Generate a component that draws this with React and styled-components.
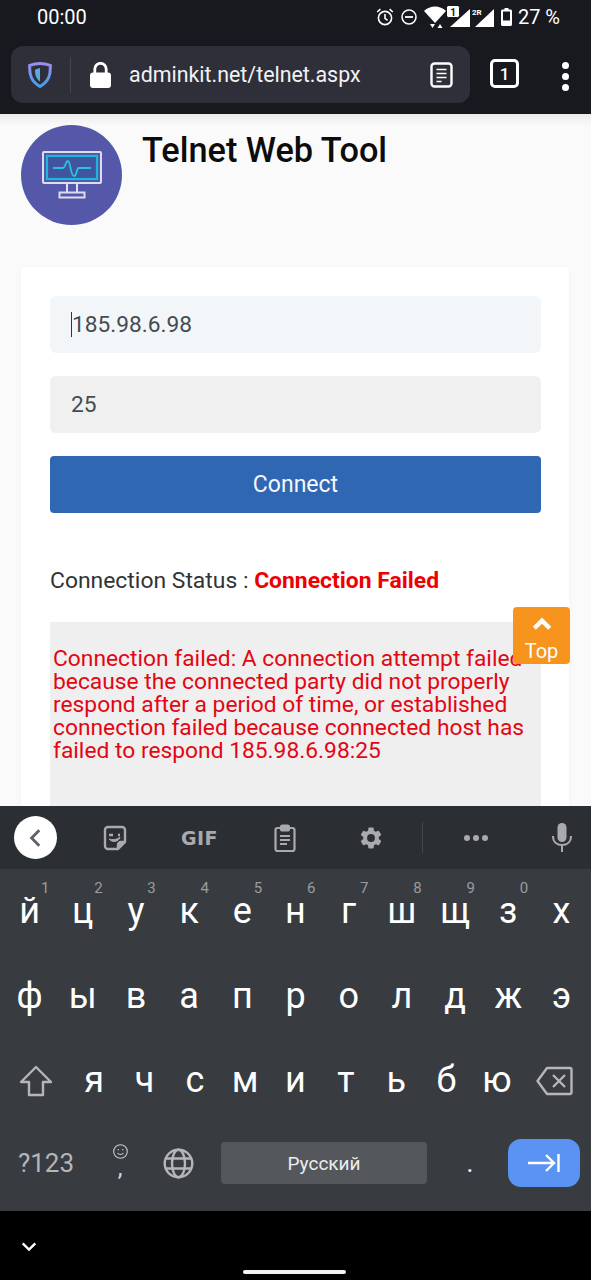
import React from 'react';
import styled, { createGlobalStyle } from 'styled-components';

const GlobalStyle = createGlobalStyle`
  html, body { margin: 0; padding: 0; background: #000; }
  body { font-family: Roboto, "Liberation Sans", sans-serif; }
`;

const Screen = styled.div`
  width: 591px;
  height: 1280px;
  display: flex;
  flex-direction: column;
  overflow: hidden;
  position: relative;
`;

const Chrome = styled.div`
  height: 114px;
  flex: none;
  background: #18181f;
  display: flex;
  flex-direction: column;
`;

const StatusBar = styled.div`
  height: 36px;
  box-sizing: border-box;
  padding: 0 31px 2px 37px;
  display: flex;
  align-items: center;
  justify-content: space-between;
  color: #fff;
  font-size: 20px;
`;

const StatusIcons = styled.div`
  display: flex;
  align-items: center;
`;

const IconSlot = styled.span`
  display: flex;
  margin-left: ${p => p.$ml || 0}px;
`;

const Toolbar = styled.div`
  height: 78px;
  padding: 10px 0 0 11px;
  box-sizing: border-box;
  display: flex;
  align-items: flex-start;
`;

const UrlBar = styled.div`
  width: 459px;
  height: 57px;
  border-radius: 12px;
  background: #2f2f39;
  display: flex;
  align-items: center;
  padding: 0 17px 0 17px;
  box-sizing: border-box;
`;

const Divider = styled.div`
  width: 1px;
  height: 36px;
  background: #45454f;
  margin: 0 19px 0 18px;
`;

const UrlText = styled.span`
  color: #f2f2f4;
  font-size: 21.4px;
  margin-left: 18px;
  flex: 1;
`;

const TabCount = styled.div`
  width: 23px;
  height: 23px;
  margin-left: 20px;
  margin-top: 13px;
  border: 3px solid #fff;
  border-radius: 5px;
  color: #fff;
  font-size: 17px;
  font-weight: 500;
  display: flex;
  align-items: center;
  justify-content: center;
`;

const MenuDots = styled.div`
  margin-left: 43px;
  margin-top: 16px;
  display: flex;
  flex-direction: column;
  gap: 4px;
  span { width: 7px; height: 7px; border-radius: 50%; background: #fff; }
`;

const Page = styled.main`
  flex: 1;
  min-height: 0;
  overflow: hidden;
  background: linear-gradient(#ececec 0, #fafafa 12px, #fafafa 100%);
  padding: 11px 22px 0 21px;
  position: relative;
`;

const Header = styled.header`
  display: flex;
  gap: 21px;
  height: 142px;
`;

const Avatar = styled.div`
  width: 101px;
  height: 100px;
  border-radius: 50%;
  background: #5558a8;
  display: flex;
  align-items: center;
  justify-content: center;
`;

const Title = styled.h1`
  margin: 3px 0 0 -1px;
  font-size: 34.3px;
  line-height: 44px;
  font-weight: 500;
  color: #0c0c0c;
`;

const Card = styled.section`
  background: #fff;
  border-radius: 4px;
  padding: 29px 28px 0 29px;
  height: 600px;
  display: flex;
  flex-direction: column;
  box-shadow: 0 0 6px rgba(0, 0, 0, 0.03);
`;

const Field = styled.div`
  height: 57px;
  flex: none;
  border-radius: 6px;
  background: ${p => (p.$focused ? '#f2f6f8' : '#f0f0f0')};
  color: #444b52;
  font-size: 22.7px;
  display: flex;
  align-items: center;
  padding-left: 21px;
  margin-bottom: 23px;
`;

const Caret = styled.span`
  width: 1px;
  height: 25px;
  background: #333;
`;

const ConnectButton = styled.button`
  height: 57px;
  flex: none;
  border: none;
  border-radius: 4px;
  background: #2f67b2;
  color: #f4f7fb;
  font: 400 23px Roboto, sans-serif;
`;

const StatusLine = styled.p`
  margin: 54px 0 27px;
  font-size: 22.9px;
  line-height: 28px;
  color: #333;
  b { color: #ee0000; font-weight: 700; }
`;

const Output = styled.pre`
  margin: 0;
  flex: 1;
  background: #efefef;
  padding: 25px 3px 0;
  color: #e30613;
  font: 400 22.8px/23px Roboto, sans-serif;
  white-space: normal;
`;

const TopButton = styled.div`
  position: absolute;
  left: 513px;
  top: 493px;
  width: 57px;
  height: 57px;
  border-radius: 4px;
  background: #f7941e;
  color: #fff;
  font-size: 20px;
  display: flex;
  flex-direction: column;
  align-items: center;
  gap: 3px;
  padding-top: 7px;
  box-sizing: border-box;
`;

const Keyboard = styled.div`
  height: 405px;
  flex: none;
  background: #383c40;
  display: flex;
  flex-direction: column;
`;

const Strip = styled.div`
  height: 63px;
  flex: none;
  background: #2b2f33;
  display: grid;
  grid-template-columns: 72px 85px 85px 86px 86px 124px 1fr;
  align-items: center;
  color: #a8aaad;
  position: relative;
`;

const StripCell = styled.div`
  display: flex;
  align-items: center;
  justify-content: center;
  padding-right: ${p => p.$pr || 0}px;
`;

const BackCircle = styled.div`
  width: 43px;
  height: 43px;
  border-radius: 50%;
  background: #fff;
  display: flex;
  align-items: center;
  justify-content: center;
  margin-left: -1px;
`;

const GifLabel = styled.span`
  font: 700 19px "DejaVu Sans", sans-serif;
  letter-spacing: 0.5px;
`;

const StripRule = styled.div`
  position: absolute;
  left: 422px;
  top: 16px;
  width: 1px;
  height: 31px;
  background: #43474b;
`;

const KeyRow = styled.div`
  height: ${p => p.$h}px;
  box-sizing: border-box;
  flex: none;
  display: grid;
  grid-template-columns: ${p => p.$cols};
  align-items: center;
  padding: ${p => p.$pad || '0 3px'};
`;

const Key = styled.div`
  position: relative;
  display: flex;
  align-items: center;
  justify-content: center;
  color: ${p => (p.$muted ? '#b4b6b8' : '#fff')};
  font-size: ${p => p.$size || 36}px;
  line-height: 0.8;
  height: 100%;
  padding-left: ${p => p.$pl || 0}px;
`;

const Hint = styled.span`
  position: absolute;
  top: 12px;
  left: 38px;
  font-size: 15px;
  line-height: 1;
  color: #9a9c9f;
`;

const SpaceKey = styled.div`
  height: 42px;
  margin-left: 24px;
  border-radius: 4px;
  background: #54585c;
  color: #eceded;
  font-size: 19px;
  display: flex;
  align-items: center;
  justify-content: center;
`;

const EnterKey = styled.div`
  height: 48px;
  width: 72px;
  justify-self: end;
  border-radius: 13px;
  background: #5b93f2;
  display: flex;
  align-items: center;
  justify-content: center;
`;

const CommaKey = styled.div`
  display: flex;
  flex-direction: column;
  align-items: center;
  color: #d5d6d7;
  font-size: 24px;
  line-height: 18px;
  margin-bottom: 6px;
`;

const NavBar = styled.div`
  height: 69px;
  flex: none;
  background: #000;
  display: flex;
  flex-direction: column;
  padding: 26px 0 0 20px;
  box-sizing: border-box;
`;

const HomePill = styled.div`
  width: 103px;
  height: 4px;
  margin: 15px 0 0 223px;
  border-radius: 2px;
  background: #f4f4f4;
`;

const Alarm = () => (
  <svg width="18" height="18" viewBox="0 0 18 18" fill="none" stroke="#fff" strokeWidth="1.6">
    <circle cx="9" cy="10" r="6.6" />
    <path d="M9 6v4.400l2.600 2M1.200 4 4.400 1.200M16.800 4 13.600 1.200" />
  </svg>
);

const Dnd = () => (
  <svg width="16" height="16" viewBox="0 0 16 16" fill="none" stroke="#fff" strokeWidth="1.500">
    <circle cx="8" cy="8" r="7" />
    <path d="M4 8h8" strokeWidth="1.800" />
  </svg>
);

const Wifi = () => (
  <svg width="22" height="22" viewBox="0 0 22 22" fill="#fff">
    <path d="M0 5C6-1 16-1 22 5L11 17Z" />
    <path d="M6 18h5l-2.500 4ZM13.500 22h5L16 18Z" />
  </svg>
);

const SignalOne = () => (
  <svg width="23" height="22" viewBox="0 0 23 22" fill="#fff">
    <path d="M23 3V21H3Z" />
    <rect x="-0.500" y="-0.500" width="13" height="12" rx="2" stroke="#18181f" />
    <text x="6" y="9.500" fontSize="10" fontWeight="700" fontFamily="Roboto, sans-serif" fill="#18181f" textAnchor="middle">1</text>
  </svg>
);

const SignalTwo = () => (
  <svg width="22" height="22" viewBox="0 0 22 22" fill="#fff">
    <path d="M22 3V21H3Z" />
    <text x="0" y="9" fontSize="8" fontWeight="700" fontFamily="Roboto, sans-serif">2R</text>
  </svg>
);

const Battery = () => (
  <svg width="11" height="18" viewBox="0 0 11 18" fill="none">
    <path d="M3.500 0h4v1.500h2c.8 0 1.500.7 1.500 1.500v13.500c0 .8-.7 1.500-1.500 1.500h-8C.7 18 0 17.300 0 16.500V3c0-.8.7-1.500 1.500-1.500h2Z" fill="#fff" />
    <rect x="2" y="3.500" width="7" height="9" fill="#18181f" />
  </svg>
);

const Shield = () => (
  <svg width="24" height="26" viewBox="0 0 24 26">
    <defs>
      <linearGradient id="sh" x1="0" y1="0" x2="0" y2="1">
        <stop offset="0" stopColor="#9d8cf0" />
        <stop offset="1" stopColor="#3fa0ef" />
      </linearGradient>
    </defs>
    <path d="M12 1.500c3.300 0 7 .7 10.300 1.800.4 9-1 15.700-10.300 21.200C2.700 19 1.300 12.300 1.700 3.300 5 2.200 8.700 1.500 12 1.500Z" fill="none" stroke="url(#sh)" strokeWidth="3" />
    <path d="M12 6v13.500c-3.800-2.800-5-6-5-11.800C8.700 7 10.300 6.400 12 6Z" fill="#5da6e8" />
  </svg>
);

const Lock = () => (
  <svg width="21" height="26" viewBox="0 0 21 26" fill="#fff">
    <path d="M4.800 12V7a5.700 5.700 0 0 1 11.400 0v5" fill="none" stroke="#fff" strokeWidth="2.800" />
    <rect x="0" y="10.500" width="21" height="15.500" rx="3" />
  </svg>
);

const ReaderIcon = () => (
  <svg width="23" height="26" viewBox="0 0 23 26" fill="none" stroke="#fff" strokeWidth="2.400">
    <rect x="1.500" y="1.500" width="20" height="23" rx="3" />
    <path d="M6.500 7.500h10M6.500 11.500h10M6.500 15.500h10M6.500 19.500h5" strokeWidth="1.700" />
  </svg>
);

const MonitorLogo = () => (
  <svg width="60" height="48" viewBox="0 0 60 48" fill="none">
    <rect x="1" y="1" width="58" height="31" rx="1" stroke="#dcdcf2" strokeWidth="2" />
    <rect x="5" y="5" width="50" height="23" fill="#41549f" stroke="#19b8d8" strokeWidth="2.200" />
    <path d="M11 17h10c2.500 0 2.500-7 5-7s2.500 15 6 15 2-8 5-8h12" stroke="#27c4dc" strokeWidth="1.800" />
    <path d="M25 33v8M35 33v8" stroke="#dcdcf2" strokeWidth="2" />
    <rect x="17.500" y="41.500" width="25" height="5" stroke="#dcdcf2" strokeWidth="2" />
  </svg>
);

const Chevron = ({ color, size = 20, dir = 'left', width = 2.600 }) => {
  const d = dir === 'left' ? 'M13 3 6 10l7 7' : dir === 'up' ? 'M3 13l7-7 7 7' : 'M3 7l7 7 7-7';
  return (
    <svg width={size} height={size} viewBox="0 0 20 20" fill="none" stroke={color} strokeWidth={width}>
      <path d={d} />
    </svg>
  );
};

const Sticker = () => (
  <svg width="24" height="26" viewBox="0 0 24 26" fill="none" stroke="#a8aaad" strokeWidth="2.400">
    <path d="M5 2h14a3 3 0 0 1 3 3v12l-7 7H5a3 3 0 0 1-3-3V5a3 3 0 0 1 3-3Z" />
    <path d="M22 17h-4a3 3 0 0 0-3 3v4" fill="#a8aaad" />
    <path d="M6 10h4M15 10h2" strokeWidth="2.600" />
    <path d="M6 14c3 1 8 1 11-2-1 5-8 6-11 2Z" fill="#a8aaad" strokeWidth="1" />
  </svg>
);

const Clipboard = () => (
  <svg width="22" height="28" viewBox="0 0 22 28" fill="none" stroke="#a8aaad" strokeWidth="2.200">
    <rect x="1.500" y="4" width="19" height="23" rx="2" />
    <rect x="7" y="1.500" width="8" height="5" rx="1.500" fill="#a8aaad" />
    <path d="M6 12h10M6 16h10M6 20h7" />
  </svg>
);

const Gear = () => (
  <svg width="26" height="26" viewBox="0 0 24 24" fill="#a8aaad">
    <path d="M19.140 12.940c.04-.3.060-.61.060-.94s-.02-.64-.070-.94l2.030-1.580a.5.5 0 0 0 .12-.61l-1.920-3.320a.5.5 0 0 0-.59-.22l-2.390.96a7 7 0 0 0-1.620-.94l-.36-2.540a.5.5 0 0 0-.48-.41h-3.840a.5.5 0 0 0-.47.41l-.36 2.540c-.59.24-1.130.57-1.620.94l-2.390-.96a.5.5 0 0 0-.59.22L2.740 8.870a.5.5 0 0 0 .12.61l2.030 1.580c-.05.3-.09.63-.09.94s.02.64.070.94l-2.030 1.580a.5.5 0 0 0-.12.61l1.920 3.320c.12.22.37.29.59.22l2.390-.96c.5.38 1.030.7 1.620.94l.36 2.540c.05.24.24.41.48.41h3.840c.24 0 .44-.17.47-.41l.36-2.540c.59-.24 1.130-.56 1.620-.94l2.390.96c.22.08.47 0 .59-.22l1.920-3.320a.5.5 0 0 0-.12-.61l-2.010-1.580ZM12 15.600A3.600 3.600 0 1 1 12 8.400a3.600 3.600 0 0 1 0 7.200Z" />
  </svg>
);

const Dots = () => (
  <svg width="24" height="6" viewBox="0 0 24 6" fill="#a8aaad">
    <circle cx="3" cy="3" r="3" />
    <circle cx="12" cy="3" r="3" />
    <circle cx="21" cy="3" r="3" />
  </svg>
);

const Mic = () => (
  <svg width="20" height="29" viewBox="0 0 20 29" fill="none">
    <rect x="5.500" y="0" width="9" height="19" rx="4.500" fill="#a8aaad" />
    <path d="M1 13c0 6 4 9 9 9s9-3 9-9M10 22v7" stroke="#a8aaad" strokeWidth="2" />
  </svg>
);

const ShiftIcon = () => (
  <svg width="34" height="32" viewBox="0 0 34 32" fill="none" stroke="#b4b6b8" strokeWidth="2.400" strokeLinejoin="round">
    <path d="M17 2 2 17h8v13h14V17h8Z" />
  </svg>
);

const Backspace = () => (
  <svg width="37" height="30" viewBox="0 0 37 30" fill="none" stroke="#b4b6b8" strokeWidth="2.400" strokeLinejoin="round">
    <path d="M11 2h23a1.500 1.500 0 0 1 1.500 1.500v23A1.500 1.500 0 0 1 34 28H11L1.500 15Z" />
    <path d="M17 9l12 12M29 9 17 21" />
  </svg>
);

const Globe = () => (
  <svg width="31" height="31" viewBox="0 0 31 31" fill="none" stroke="#b4b6b8" strokeWidth="2.400">
    <circle cx="15.500" cy="15.500" r="13.800" />
    <ellipse cx="15.500" cy="15.500" rx="6.500" ry="13.800" />
    <path d="M2.500 10.500h26M2.500 20.500h26" />
  </svg>
);

const Smiley = () => (
  <svg width="15" height="15" viewBox="0 0 15 15" fill="none" stroke="#c8c9ca" strokeWidth="1.100">
    <circle cx="7.500" cy="7.500" r="6.800" />
    <circle cx="5.200" cy="5.800" r=".7" fill="#c8c9ca" stroke="none" />
    <circle cx="9.800" cy="5.800" r=".7" fill="#c8c9ca" stroke="none" />
    <path d="M4.500 9c1.500 2 4.500 2 6 0" />
  </svg>
);

const TabArrow = () => (
  <svg width="32" height="20" viewBox="0 0 32 20" fill="none" stroke="#fff" strokeWidth="2.400">
    <path d="M0 10h26M18 2l8 8-8 8M30.500 1v18" />
  </svg>
);

const row1 = [['й', 1], ['ц', 2], ['у', 3], ['к', 4], ['е', 5], ['н', 6], ['г', 7], ['ш', 8], ['щ', 9], ['з', 0], ['х']];
const row2 = ['ф', 'ы', 'в', 'а', 'п', 'р', 'о', 'л', 'д', 'ж', 'э'];
const row3 = ['я', 'ч', 'с', 'м', 'и', 'т', 'ь', 'б', 'ю'];

const App = () => (
  <Screen>
    <GlobalStyle />
    <Chrome>
      <StatusBar>
        <span>00:00</span>
        <StatusIcons>
          <IconSlot><Alarm /></IconSlot>
          <IconSlot $ml={7}><Dnd /></IconSlot>
          <IconSlot $ml={7}><Wifi /></IconSlot>
          <IconSlot $ml={1}><SignalOne /></IconSlot>
          <IconSlot $ml={2}><SignalTwo /></IconSlot>
          <IconSlot $ml={7}><Battery /></IconSlot>
          <IconSlot $ml={6}>27 %</IconSlot>
        </StatusIcons>
      </StatusBar>
      <Toolbar>
        <UrlBar>
          <Shield />
          <Divider />
          <Lock />
          <UrlText>adminkit.net/telnet.aspx</UrlText>
          <ReaderIcon />
        </UrlBar>
        <TabCount>1</TabCount>
        <MenuDots>
          <span />
          <span />
          <span />
        </MenuDots>
      </Toolbar>
    </Chrome>
    <Page>
      <Header>
        <Avatar>
          <MonitorLogo />
        </Avatar>
        <Title>Telnet Web Tool</Title>
      </Header>
      <Card>
        <Field $focused>
          <Caret />
          185.98.6.98
        </Field>
        <Field>25</Field>
        <ConnectButton>Connect</ConnectButton>
        <StatusLine>
          Connection Status : <b>Connection Failed</b>
        </StatusLine>
        <Output>
          Connection failed: A connection attempt failed because the connected party did not properly respond after a period of time, or established connection failed because connected host has failed to respond 185.98.6.98:25
        </Output>
      </Card>
      <TopButton>
        <Chevron dir="up" color="#fff" size={22} width={4} />
        Top
      </TopButton>
    </Page>
    <Keyboard>
      <Strip>
        <StripCell>
          <BackCircle>
            <Chevron color="#5f6368" size={22} />
          </BackCircle>
        </StripCell>
        <StripCell><Sticker /></StripCell>
        <StripCell><GifLabel>GIF</GifLabel></StripCell>
        <StripCell><Clipboard /></StripCell>
        <StripCell><Gear /></StripCell>
        <StripCell><Dots /></StripCell>
        <StripCell $pr={5}><Mic /></StripCell>
        <StripRule />
      </Strip>
      <KeyRow $h={85} $cols="repeat(11, 1fr)">
        {row1.map(([ch, n]) => (
          <Key key={ch}>
            {ch}
            {n !== undefined ? <Hint>{n}</Hint> : null}
          </Key>
        ))}
      </KeyRow>
      <KeyRow $h={84} $cols="repeat(11, 1fr)">
        {row2.map(ch => <Key key={ch}>{ch}</Key>)}
      </KeyRow>
      <KeyRow $h={85} $cols="66px repeat(9, 1fr) 66px" $pad="0 3px">
        <Key><ShiftIcon /></Key>
        {row3.map(ch => <Key key={ch}>{ch}</Key>)}
        <Key><Backspace /></Key>
      </KeyRow>
      <KeyRow $h={88} $cols="70px 78px 38px 230px 81px 72px" $pad="0 11px 8px 11px">
        <Key $muted $size={26}>?123</Key>
        <Key>
          <CommaKey>
            <Smiley />
            ,
          </CommaKey>
        </Key>
        <Key><Globe /></Key>
        <SpaceKey>Русский</SpaceKey>
        <Key $size={26} $pl={5}>.</Key>
        <EnterKey><TabArrow /></EnterKey>
      </KeyRow>
    </Keyboard>
    <NavBar>
      <Chevron dir="down" color="#fff" size={18} />
      <HomePill />
    </NavBar>
  </Screen>
);

export default App;
